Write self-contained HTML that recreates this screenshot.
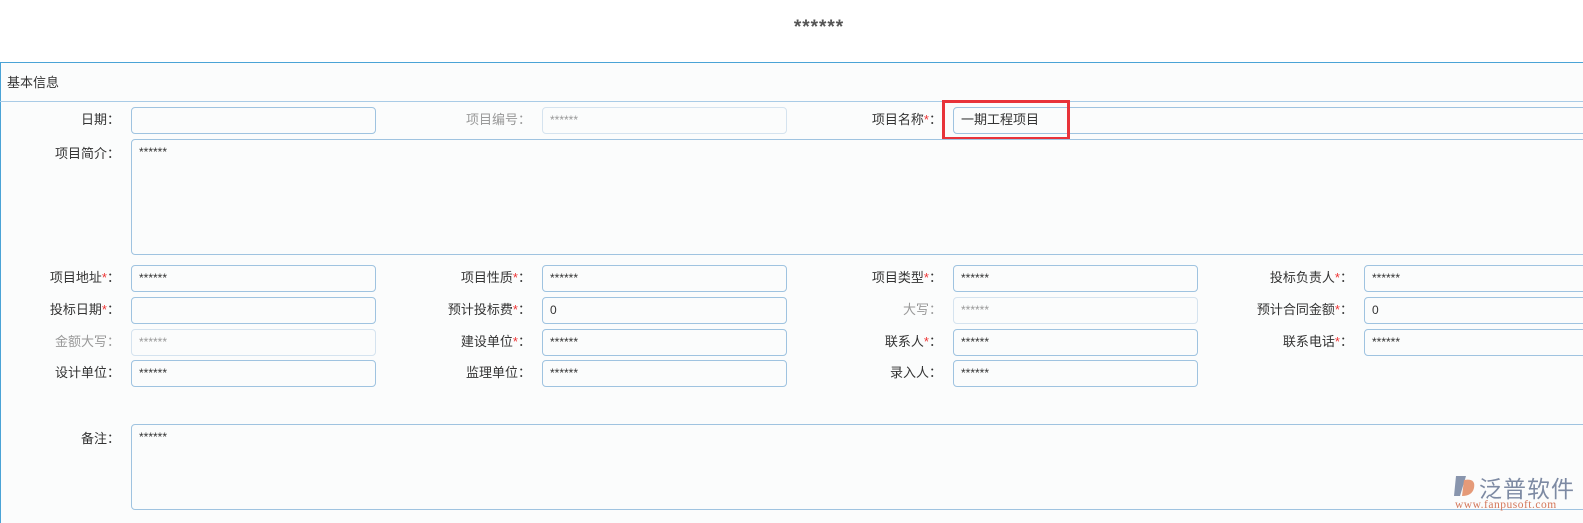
<!DOCTYPE html>
<html><head><meta charset="utf-8"><style>
body{margin:0;width:1583px;height:520px;overflow:hidden;background:#fff;font-family:"Liberation Sans","Noto Sans CJK SC",sans-serif;font-size:13px;color:#333;position:relative}
.a{position:absolute}
.t{position:absolute;font-size:19px;font-weight:bold;color:#555;left:0;width:1638px;text-align:center;top:17px;letter-spacing:1px}
.box{position:absolute;left:0;top:62px;width:1600px;height:460px;border-top:1px solid #4aa3d6;border-left:1px solid #4aa3d6;background:#fbfcfc}
.hd{position:absolute;left:0;top:101px;width:1583px;border-top:1px solid #a9cbe6}
.l{position:absolute;text-align:right;width:120px;font-size:13px;line-height:26px}
.i{position:absolute;box-sizing:border-box;border:1px solid #9fc3e0;border-radius:4px;background:#fbfcfc;font-size:12px;padding:4px 7px;line-height:16px;height:27px}
.d{border-color:#d5e3ef;color:#999}
.g{color:#999}
.r{color:#e33}
</style></head><body>
<div class="t">******</div>
<div class="box"></div>
<div class="a" style="left:7px;top:72px;font-size:13px">基本信息</div>
<div class="hd"></div>

<div class="l" style="left:0;top:107px">日期：</div>
<div class="i" style="left:131px;top:107px;width:245px"></div>
<div class="l g" style="left:411px;top:107px">项目编号：</div>
<div class="i d" style="left:542px;top:107px;width:245px">******</div>
<div class="l" style="left:822px;top:107px">项目名称<span class="r">*</span>：</div>
<div class="i" style="left:953px;top:107px;width:700px;font-size:13px">一期工程项目</div>
<div class="a" style="left:942px;top:100px;width:122px;height:34px;border:3px solid #e8333a"></div>

<div class="l" style="left:0;top:141px">项目简介：</div>
<div class="i" style="left:131px;top:139px;width:1500px;height:116px">******</div>

<div class="l" style="left:0;top:265px">项目地址<span class="r">*</span>：</div>
<div class="i" style="left:131px;top:265px;width:245px">******</div>
<div class="l" style="left:411px;top:265px">项目性质<span class="r">*</span>：</div>
<div class="i" style="left:542px;top:265px;width:245px">******</div>
<div class="l" style="left:822px;top:265px">项目类型<span class="r">*</span>：</div>
<div class="i" style="left:953px;top:265px;width:245px">******</div>
<div class="l" style="left:1233px;top:265px">投标负责人<span class="r">*</span>：</div>
<div class="i" style="left:1364px;top:265px;width:300px">******</div>

<div class="l" style="left:0;top:297px">投标日期<span class="r">*</span>：</div>
<div class="i" style="left:131px;top:297px;width:245px"></div>
<div class="l" style="left:411px;top:297px">预计投标费<span class="r">*</span>：</div>
<div class="i" style="left:542px;top:297px;width:245px">0</div>
<div class="l g" style="left:822px;top:297px">大写：</div>
<div class="i d" style="left:953px;top:297px;width:245px">******</div>
<div class="l" style="left:1233px;top:297px">预计合同金额<span class="r">*</span>：</div>
<div class="i" style="left:1364px;top:297px;width:300px">0</div>

<div class="l g" style="left:0;top:329px">金额大写：</div>
<div class="i d" style="left:131px;top:329px;width:245px">******</div>
<div class="l" style="left:411px;top:329px">建设单位<span class="r">*</span>：</div>
<div class="i" style="left:542px;top:329px;width:245px">******</div>
<div class="l" style="left:822px;top:329px">联系人<span class="r">*</span>：</div>
<div class="i" style="left:953px;top:329px;width:245px">******</div>
<div class="l" style="left:1233px;top:329px">联系电话<span class="r">*</span>：</div>
<div class="i" style="left:1364px;top:329px;width:300px">******</div>

<div class="l" style="left:0;top:360px">设计单位：</div>
<div class="i" style="left:131px;top:360px;width:245px">******</div>
<div class="l" style="left:411px;top:360px">监理单位：</div>
<div class="i" style="left:542px;top:360px;width:245px">******</div>
<div class="l" style="left:822px;top:360px">录入人：</div>
<div class="i" style="left:953px;top:360px;width:245px">******</div>

<div class="l" style="left:0;top:426px">备注：</div>
<div class="i" style="left:131px;top:424px;width:1500px;height:86px">******</div>

<svg class="a" style="left:1452px;top:474px" width="26" height="26" viewBox="0 0 26 26"><path d="M4 2 L14 2 L8 22 L2 22 Z" fill="#8895ad"/><path d="M12 6 Q24 4 22 14 Q20 22 10 22 Z" fill="#e59a78"/></svg>
<div class="a" style="left:1479px;top:470px;font-size:23px;color:#7d8aa3;letter-spacing:1px">泛普软件</div>
<div class="a" style="left:1455px;top:499px;font-size:11.5px;color:#d4775a;font-family:'Liberation Serif',serif;letter-spacing:0.5px">www.fanpusoft.com</div>
</body></html>
